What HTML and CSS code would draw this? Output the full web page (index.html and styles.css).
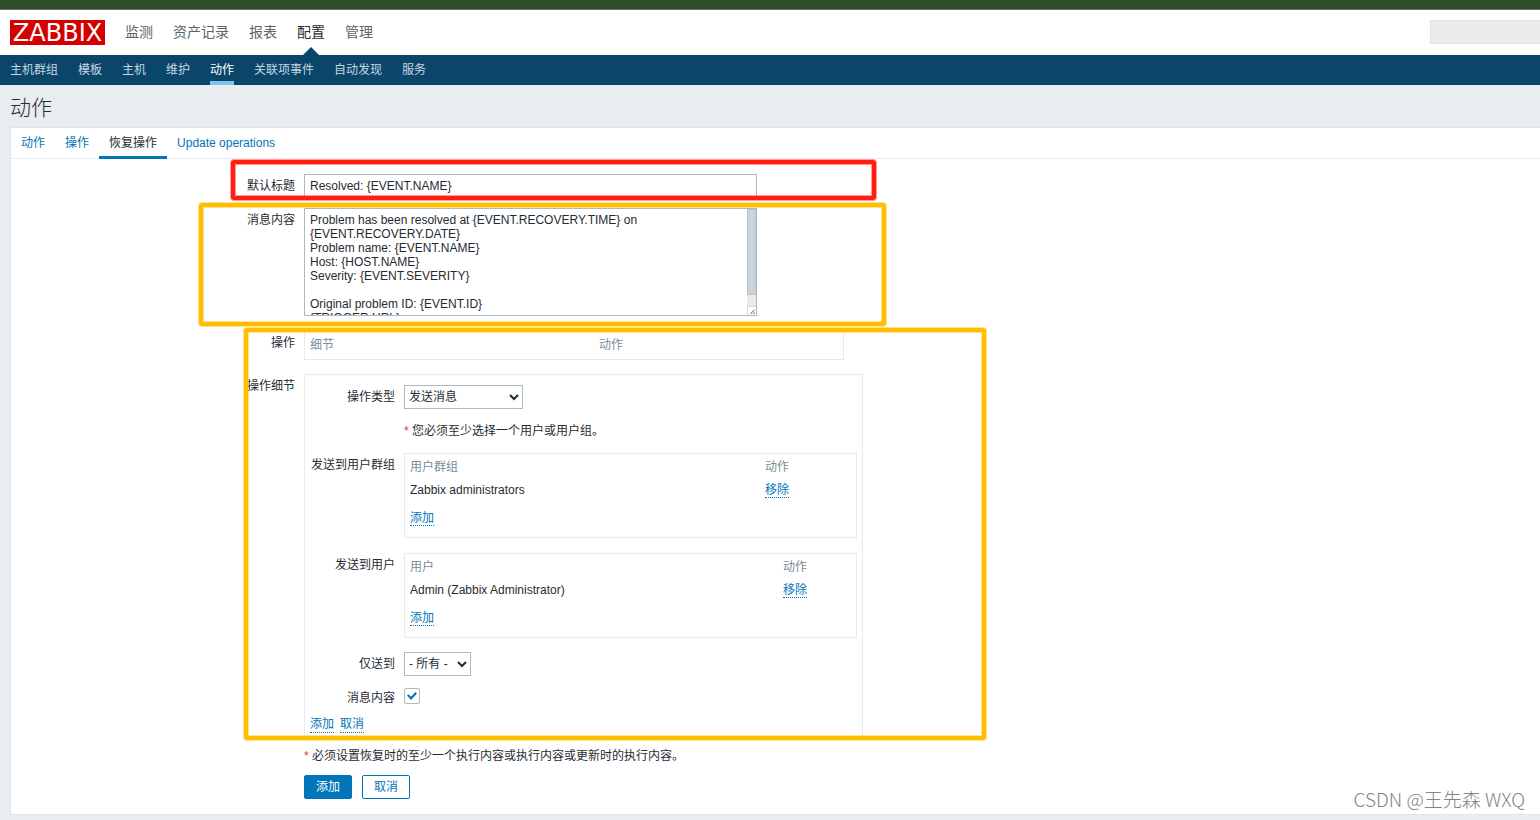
FILE: index.html
```html
<!DOCTYPE html>
<html lang="zh-CN">
<head>
<meta charset="utf-8">
<title>动作</title>
<link rel="stylesheet" href="styles.css">
</head>
<body>
<div class="strip"></div>
<header class="header">
  <a class="logo" href="#">ZABBIX</a>
  <nav class="main-nav">
    <a href="#">监测</a>
    <a href="#">资产记录</a>
    <a href="#">报表</a>
    <a href="#" class="selected">配置</a>
    <a href="#">管理</a>
  </nav>
  <input class="search" type="text" aria-label="搜索">
</header>
<nav class="sub-nav">
  <a href="#">主机群组</a>
  <a href="#">模板</a>
  <a href="#">主机</a>
  <a href="#">维护</a>
  <a href="#" class="selected">动作</a>
  <a href="#">关联项事件</a>
  <a href="#">自动发现</a>
  <a href="#">服务</a>
</nav>
<main>
  <h1>动作</h1>
  <section class="panel">
    <nav class="tabs">
      <a href="#">动作</a>
      <a href="#">操作</a>
      <a href="#" class="selected">恢复操作</a>
      <a href="#">Update operations</a>
    </nav>
    <form class="form">
      <label for="subject">默认标题</label>
      <input class="text" id="subject" type="text" value="Resolved: {EVENT.NAME}">

      <label for="message">消息内容</label>
      <div class="area-wrap">
        <textarea class="text area" id="message">Problem has been resolved at {EVENT.RECOVERY.TIME} on {EVENT.RECOVERY.DATE}
Problem name: {EVENT.NAME}
Host: {HOST.NAME}
Severity: {EVENT.SEVERITY}

Original problem ID: {EVENT.ID}
{TRIGGER.URL}</textarea>
        <div class="scrollbar" aria-hidden="true">
          <div class="thumb"></div>
          <svg class="grip" viewBox="0 0 9 9" width="9" height="9"><path d="M2.500 8L7.500 3M5.500 8L7.500 6" stroke="#444" fill="none"/></svg>
        </div>
      </div>

      <span class="label spaced">操作</span>
      <div class="box operations spaced">
        <table>
          <tr><th class="col-detail">细节</th><th>动作</th></tr>
        </table>
      </div>

      <span class="label spaced-small">操作细节</span>
      <div class="box details spaced-small">
        <div class="inner">
          <label for="type">操作类型</label>
          <select id="type" class="wide"><option>发送消息</option></select>

          <p class="note inner-field"><span class="star">*</span> 您必须至少选择一个用户或用户组。</p>

          <span class="label">发送到用户群组</span>
          <div class="box list">
            <table>
              <tr><th class="col-group">用户群组</th><th>动作</th></tr>
              <tr><td>Zabbix administrators</td><td><a class="link" href="#">移除</a></td></tr>
              <tr class="add"><td colspan="2"><a class="link" href="#">添加</a></td></tr>
            </table>
          </div>

          <span class="label spaced">发送到用户</span>
          <div class="box list spaced">
            <table>
              <tr><th class="col-user">用户</th><th>动作</th></tr>
              <tr><td>Admin (Zabbix Administrator)</td><td><a class="link" href="#">移除</a></td></tr>
              <tr class="add"><td colspan="2"><a class="link" href="#">添加</a></td></tr>
            </table>
          </div>

          <label class="spaced-small" for="media">仅送到</label>
          <select id="media" class="narrow spaced-small"><option>- 所有 -</option></select>

          <label for="default-message">消息内容</label>
          <input id="default-message" type="checkbox" checked>
        </div>
        <div class="links">
          <a class="link" href="#">添加</a>
          <a class="link" href="#">取消</a>
        </div>
      </div>

      <p class="note field"><span class="star">*</span> 必须设置恢复时的至少一个执行内容或执行内容或更新时的执行内容。</p>
      <div class="buttons field">
        <button type="submit" class="primary">添加</button>
        <button type="button">取消</button>
      </div>
    </form>
  </section>
</main>
<div class="mark mark-title"></div>
<div class="mark mark-message"></div>
<div class="mark mark-operations"></div>
<div class="watermark">CSDN @王先森 WXQ</div>
</body>
</html>
```
FILE: styles.css
```css
* {
  box-sizing: border-box;
}

body {
  margin: 0;
  position: relative;
  min-height: 100vh;
  overflow-x: hidden;
  background: #e9edf0;
  color: #1f2c33;
  font: 12px/24px "Liberation Sans", "Noto Sans CJK SC", sans-serif;
}

a {
  color: #0275b8;
  text-decoration: none;
}

input,
select,
textarea,
button {
  margin: 0;
  font: inherit;
  color: inherit;
}

.strip {
  height: 10px;
  background: #2e4b2c;
  border-bottom: 1px solid #64795f;
}

.header {
  display: flex;
  align-items: flex-start;
  height: 45px;
  padding: 10px 0 0 10px;
  background: #fff;
}

.logo {
  width: 95px;
  height: 25px;
  background: #d40000;
  color: #fff;
  font: 24px/27px "DejaVu Sans", sans-serif;
  text-align: center;
}

.main-nav {
  display: flex;
  gap: 20px;
  margin-left: 20px;
  font-size: 14px;
}

.main-nav a {
  position: relative;
  height: 35px;
  color: #5a6469;
}

.main-nav .selected {
  color: #1f2c33;
}

.main-nav .selected::after {
  content: "";
  position: absolute;
  bottom: 0;
  left: 6px;
  border: 8px solid transparent;
  border-top: 0;
  border-bottom-color: #0a466a;
}

.search {
  width: 110px;
  height: 24px;
  margin-left: auto;
  background: #ebebeb;
  border: 1px solid #e3e3e3;
  border-right: 0;
}

.sub-nav {
  display: flex;
  gap: 20px;
  height: 30px;
  padding-left: 10px;
  background: #0a466a;
  line-height: 30px;
}

.sub-nav a {
  color: #c5d7e1;
}

.sub-nav .selected {
  color: #fff;
  border-bottom: 4px solid #7fc4f0;
}

h1 {
  margin: 0;
  padding: 9px 10px 6px;
  font-size: 21px;
  line-height: 27px;
  font-weight: 300;
}

.panel {
  margin: 0 0 5px 10px;
  background: #fff;
  border: 1px solid #dfe4e7;
  border-right: 0;
}

.tabs {
  display: flex;
  height: 31px;
  border-bottom: 1px solid #ebeef0;
  line-height: 30px;
}

.tabs a {
  height: 31px;
  padding: 0 10px;
}

.tabs .selected {
  color: #1f2c33;
  border-bottom: 3px solid #0275b8;
}

.form {
  display: grid;
  grid-template-columns: 284px 1fr;
  gap: 10px 9px;
  justify-items: start;
  padding: 15px 0;
}

label,
.label {
  justify-self: end;
}

.field,
.inner-field {
  grid-column: 2;
}

.spaced {
  margin-top: 5px;
}

.spaced-small {
  margin-top: 4px;
}

.text {
  width: 453px;
  height: 24px;
  padding: 0 5px;
  background: #fff;
  border: 1px solid #acbbc2;
  border-radius: 0;
}

.area-wrap {
  position: relative;
}

.area {
  display: block;
  height: 108px;
  padding: 4px 14px 4px 5px;
  line-height: 14px;
  overflow: hidden;
  resize: none;
}

.scrollbar {
  position: absolute;
  top: 1px;
  right: 1px;
  bottom: 1px;
  width: 9px;
  display: flex;
  flex-direction: column;
  justify-content: space-between;
  background: #eaeaea;
}

.thumb {
  height: 86px;
  background: #ccd4da;
  border: 1px solid #bac6cc;
}

.grip {
  display: block;
  background: #fff;
  border: solid #d5dbdf;
  border-width: 1px 0 0 1px;
}

.box {
  border: 1px solid #e8ebee;
}

table {
  width: 100%;
  border-collapse: collapse;
  line-height: 23px;
}

th,
td {
  padding: 0 5px;
  font-weight: 400;
  text-align: left;
}

th {
  color: #768d99;
}

.operations {
  width: 540px;
  height: 29px;
  padding-top: 2px;
}

.col-detail {
  width: 289px;
}

.details {
  width: 559px;
  padding: 10px 5px 0;
}

.inner {
  display: grid;
  grid-template-columns: 85px 1fr;
  gap: 10px 9px;
  justify-items: start;
}

.list {
  width: 453px;
  padding: 2px 0;
}

.list .add {
  line-height: 33px;
}

.col-group {
  width: 355px;
}

.col-user {
  width: 373px;
}

.link {
  border-bottom: 1px dotted #0275b8;
}

.note {
  margin: 0;
}

.note.field {
  line-height: 17px;
}

.star {
  color: #e33734;
}

select {
  height: 24px;
  padding: 0;
  background: #fff;
  border: 1px solid #acbbc2;
  border-radius: 0;
}

.wide {
  width: 119px;
}

.narrow {
  width: 67px;
}

input[type="checkbox"] {
  appearance: none;
  display: grid;
  place-items: center;
  width: 16px;
  height: 16px;
  margin-top: 2px;
  border: 1px solid #acbbc2;
  border-radius: 2px;
}

input[type="checkbox"]:checked::before {
  content: "";
  width: 10px;
  height: 8px;
  background: #0275b8;
  clip-path: polygon(0 45%, 15% 28%, 40% 58%, 85% 0, 100% 18%, 40% 100%);
}

.links {
  display: flex;
  gap: 6px;
  padding: 6px 0 4px;
  line-height: 16px;
}

.buttons {
  display: flex;
  gap: 10px;
}

button {
  height: 24px;
  width: 48px;
  padding: 0;
  background: #fff;
  border: 1px solid #0275b8;
  border-radius: 2px;
  color: #0275b8;
  line-height: 22px;
}

.primary {
  background: #0275b8;
  color: #fff;
}

/* Highlight frames drawn over the form */
.mark {
  position: absolute;
  border: 4px solid #ffbf00;
  border-radius: 3px;
  box-shadow: 0 0 0 1px #ffbf0070, inset 0 0 0 1px #ffbf0070;
  pointer-events: none;
}

.mark-title {
  left: 231px;
  top: 160px;
  width: 645px;
  height: 40px;
  border-color: #ff1e10;
  box-shadow: 0 0 0 1px #ff1e1070, inset 0 0 0 1px #ff1e1070;
}

.mark-message {
  left: 199px;
  top: 203px;
  width: 687px;
  height: 123px;
}

.mark-operations {
  left: 244px;
  top: 328px;
  width: 742px;
  height: 412px;
}

.watermark {
  position: absolute;
  right: 15px;
  bottom: 9px;
  color: #858585;
  font: 300 19px/24px "Noto Sans CJK SC", sans-serif;
}
```
